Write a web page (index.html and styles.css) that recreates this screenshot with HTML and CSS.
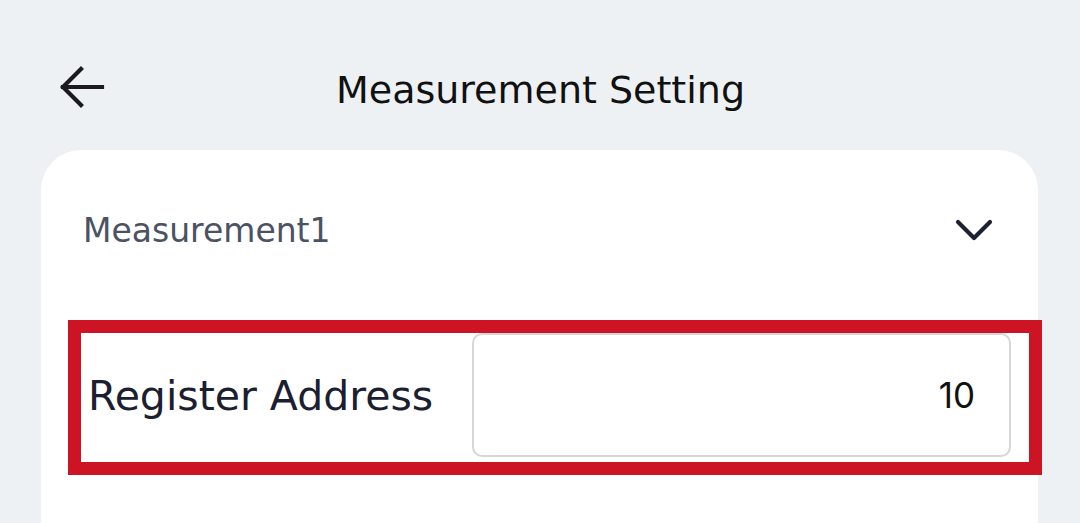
FILE: index.html
```html
<!DOCTYPE html>
<html lang="en">
<head>
<meta charset="utf-8">
<title>Measurement Setting</title>
<link rel="stylesheet" href="styles.css">
</head>
<body>
<div class="page">
  <header class="topbar">
    <button class="back" aria-label="Back">
      <svg width="48" height="48" viewBox="0 0 48 48" fill="none" stroke="#1b1b1d" stroke-width="4.2" stroke-linecap="square" stroke-linejoin="miter">
        <path d="M44 21 H5"/>
        <path d="M23 3 L5 21 L23 39"/>
      </svg>
    </button>
    <h1 class="title">Measurement Setting</h1>
  </header>
  <section class="card">
    <div class="section-head">
      <span class="section-name">Measurement1</span>
      <svg class="chevron" width="40" height="24" viewBox="0 0 40 24" fill="none" stroke="#1c2233" stroke-width="4.2" stroke-linecap="round" stroke-linejoin="round">
        <path d="M3 3 L19 19 L35 3"/>
      </svg>
    </div>
    <div class="field highlight">
      <span class="field-label">Register Address</span>
      <div class="field-input">10</div>
    </div>
  </section>
</div>
</body>
</html>
```
FILE: styles.css
```css
* { box-sizing: border-box; }
html, body { margin: 0; padding: 0; }
body {
  background: #eef1f4;
  font-family: "DejaVu Sans", Inter, sans-serif;
  width: 1080px;
  height: 523px;
  overflow: hidden;
}
.page { padding-top: 60px; }
.topbar {
  height: 60px;
  display: flex;
  align-items: center;
  position: relative;
}
.back {
  margin-left: 58px;
  width: 48px;
  height: 48px;
  padding: 0;
  border: 0;
  background: none;
  display: flex;
}
.title {
  margin: 0 0 0 230px;
  font-size: 38px;
  font-weight: 400;
  color: #111;
}
.card {
  margin: 30px 42px 0 41px;
  background: #fff;
  border-radius: 40px 40px 0 0;
  height: 373px;
  padding-top: 50px;
}
.section-head {
  display: flex;
  align-items: center;
  justify-content: space-between;
  padding: 0 43px 0 42px;
  height: 60px;
}
.section-name {
  font-size: 33px;
  color: #4b5263;
}
.chevron { margin-top: 2px; }
.field {
  margin: 60px -4px 0 27px;
  height: 155px;
  border: 13px solid #cc1424;
  display: flex;
  align-items: flex-start;
  padding: 0 18px 5px 7px;
}
.field-label {
  font-size: 41px;
  color: #1a2030;
  flex: 0 0 384px;
  align-self: center;
  padding-top: 2px;
}
.field-input {
  flex: 1;
  height: 124px;
  border: 2px solid #d6d6d6;
  border-radius: 10px;
  display: flex;
  align-items: center;
  justify-content: flex-end;
  padding-right: 34px;
  font-family: Inter, "DejaVu Sans", sans-serif;
  font-size: 35px;
  color: #111;
}
```
